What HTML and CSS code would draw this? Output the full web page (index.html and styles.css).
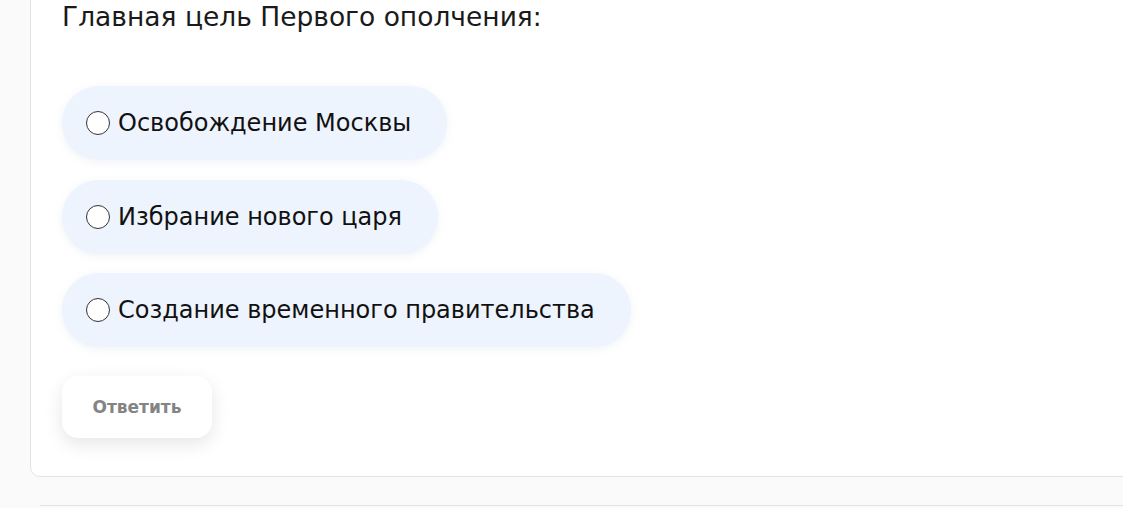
FILE: index.html
```html
<!DOCTYPE html>
<html lang="ru">
<head>
    <meta charset="UTF-8">
    <meta name="viewport" content="width=device-width, initial-scale=1.0">
    <link rel="stylesheet" href="styles.css">
    <title>Тест</title>
</head>
<body>
    <div class="card">
        <h2 class="question">Главная цель Первого ополчения:</h2>
        <form class="answers">
            <label class="option">
                <input type="radio" name="answer" value="1">
                <span>Освобождение Москвы</span>
            </label>
            <label class="option">
                <input type="radio" name="answer" value="2">
                <span>Избрание нового царя</span>
            </label>
            <label class="option">
                <input type="radio" name="answer" value="3">
                <span>Создание временного правительства</span>
            </label>
            <button type="button" class="btn">Ответить</button>
        </form>
    </div>
    <div class="next"></div>
</body>
</html>
```

FILE: styles.css
```css
body {
    font-family: 'DejaVu Sans', sans-serif;
    margin: 0;
    padding: 0;
    height: 508px;
    overflow: hidden;
    background-color: #fafafa;
    color: #111;
}

.card {
    margin: -2px -20px 0 30px;
    padding: 0 30px 38px 31px;
    background-color: #fff;
    border: 1px solid #e3e3e3;
    border-radius: 0 0 10px 10px;
}

.question {
    margin: 0 0 51px;
    font-size: 26.5px;
    font-weight: 400;
    line-height: 36px;
    color: #1a1a1a;
}

.answers {
    display: flex;
    flex-direction: column;
    align-items: flex-start;
    gap: 19.5px;
}

.option {
    display: flex;
    align-items: center;
    height: 74px;
    padding: 0 36px 0 24px;
    box-sizing: border-box;
    border-radius: 37px;
    background-color: #edf4fd;
    box-shadow: 0 2px 8px rgba(120, 150, 190, 0.12);
    font-size: 24px;
    cursor: pointer;
}

.option input {
    appearance: none;
    width: 24px;
    height: 24px;
    margin: 0 8px 0 0;
    border: 1px solid #333;
    border-radius: 50%;
    background-color: #fff;
    flex-shrink: 0;
}

.btn {
    margin-top: 9px;
    width: 150px;
    height: 62px;
    border: none;
    border-radius: 16px;
    background-color: #fff;
    box-shadow: 0 6px 18px rgba(0, 0, 0, 0.1);
    font-family: inherit;
    font-size: 17px;
    font-weight: 600;
    color: #848484;
    cursor: pointer;
}

.next {
    margin: 28px 0 0 40px;
    height: 40px;
    border-top: 1px solid #e3e3e3;
    background-color: #fafafa;
}
```
